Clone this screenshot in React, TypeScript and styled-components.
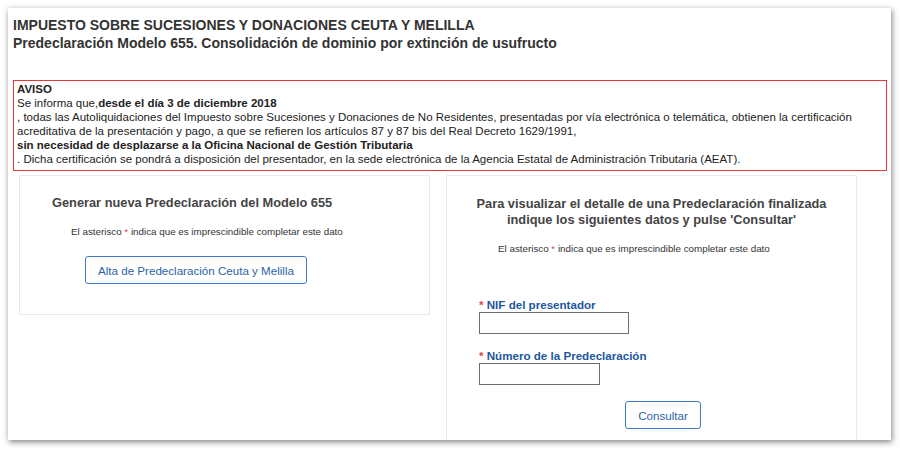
import React from "react";
import styled, { createGlobalStyle } from "styled-components";

const Global = createGlobalStyle`
  html, body { margin: 0; padding: 0; background: #ffffff; }
  body { padding: 8px; font-family: "Liberation Sans", Arial, sans-serif; }
  * { box-sizing: border-box; }
`;

const Card = styled.div`
  width: 883px;
  height: 432px;
  background: #fff;
  overflow: hidden;
  box-shadow: 1px 2px 6px rgba(0, 0, 0, 0.5);
  padding: 8px 4px 0 5px;
  color: #333;
`;

const Heading = styled.h1`
  margin: 0;
  font-size: 14px;
  line-height: 18px;
  font-weight: bold;
  color: #333;
`;

const Notice = styled.div`
  margin-top: 28px;
  border: 1px solid #e8363d;
  padding: 1px 4px 4px 3px;
  font-size: 11.5px;
  line-height: 14px;
  color: #222;
`;

const NoticeLine = styled.div``;

const Panels = styled.div`
  display: flex;
  margin-top: 4px;
  gap: 16px;
  padding-left: 6px;
`;

const Panel = styled.section<{ $tall?: boolean }>`
  width: 411px;
  height: ${(p) => (p.$tall ? "400px" : "140px")};
  border: 1px solid #e5ebf1;
  display: flex;
  flex-direction: column;
`;

const PanelTitle = styled.h2<{ $center?: boolean; $indent?: number; $top: number }>`
  margin: ${(p) => p.$top}px 0 0 ${(p) => p.$indent ?? 0}px;
  font-size: 12.8px;
  line-height: 16px;
  font-weight: bold;
  color: #444;
  text-align: ${(p) => (p.$center ? "center" : "left")};
`;

const Hint = styled.p<{ $indent: number; $top: number }>`
  margin: ${(p) => p.$top}px 0 0 ${(p) => p.$indent}px;
  font-size: 9.8px;
  line-height: 12px;
  color: #333;
`;

const Star = styled.span`
  color: #e0453e;
`;

const OutlineButton = styled.button<{ $indent: number; $top: number; $w: number }>`
  margin: ${(p) => p.$top}px 0 0 ${(p) => p.$indent}px;
  width: ${(p) => p.$w}px;
  height: 28px;
  border: 1px solid #3d7cc4;
  border-radius: 3px;
  background: #fff;
  color: #2c64a8;
  font-family: "Liberation Sans", Arial, sans-serif;
  font-size: 11.6px;
  padding: 0;
  align-self: flex-start;
`;

const Label = styled.label<{ $top: number }>`
  display: block;
  margin: ${(p) => p.$top}px 0 0 32px;
  font-size: 11.6px;
  line-height: 14px;
  font-weight: bold;
  color: #1d57a0;
`;

const TextInput = styled.input<{ $w: number }>`
  display: block;
  margin: 0 0 0 32px;
  width: ${(p) => p.$w}px;
  height: 22px;
  border: 1px solid #6e6e6e;
  border-radius: 0;
  padding: 0 4px;
`;

export default function App() {
  return (
    <>
      <Global />
      <Card>
        <Heading>IMPUESTO SOBRE SUCESIONES Y DONACIONES CEUTA Y MELILLA</Heading>
        <Heading>Predeclaración Modelo 655. Consolidación de dominio por extinción de usufructo</Heading>
        <Notice>
          <NoticeLine>
            <b>AVISO</b>
          </NoticeLine>
          <NoticeLine>
            Se informa que,<b>desde el día 3 de diciembre 2018</b>
          </NoticeLine>
          <NoticeLine>
            , todas las Autoliquidaciones del Impuesto sobre Sucesiones y Donaciones de No Residentes, presentadas por vía
            electrónica o telemática, obtienen la certificación acreditativa de la presentación y pago, a que se refieren los
            artículos 87 y 87 bis del Real Decreto 1629/1991,
          </NoticeLine>
          <NoticeLine>
            <b>sin necesidad de desplazarse a la Oficina Nacional de Gestión Tributaria</b>
          </NoticeLine>
          <NoticeLine>
            . Dicha certificación se pondrá a disposición del presentador, en la sede electrónica de la Agencia Estatal de
            Administración Tributaria (AEAT).
          </NoticeLine>
        </Notice>
        <Panels>
          <Panel>
            <PanelTitle $top={19} $indent={32}>
              Generar nueva Predeclaración del Modelo 655
            </PanelTitle>
            <Hint $top={15} $indent={51}>
              El asterisco <Star>*</Star> indica que es imprescindible completar este dato
            </Hint>
            <OutlineButton $top={18} $indent={65} $w={222}>
              Alta de Predeclaración Ceuta y Melilla
            </OutlineButton>
          </Panel>
          <Panel $tall>
            <PanelTitle $top={20} $center>
              Para visualizar el detalle de una Predeclaración finalizada
              <br />
              indique los siguientes datos y pulse 'Consultar'
            </PanelTitle>
            <Hint $top={15} $indent={51}>
              El asterisco <Star>*</Star> indica que es imprescindible completar este dato
            </Hint>
            <Label $top={43}>
              <Star>*</Star> NIF del presentador
            </Label>
            <TextInput $w={150} />
            <Label $top={15}>
              <Star>*</Star> Número de la Predeclaración
            </Label>
            <TextInput $w={121} />
            <OutlineButton $top={16} $indent={178} $w={76}>
              Consultar
            </OutlineButton>
          </Panel>
        </Panels>
      </Card>
    </>
  );
}
